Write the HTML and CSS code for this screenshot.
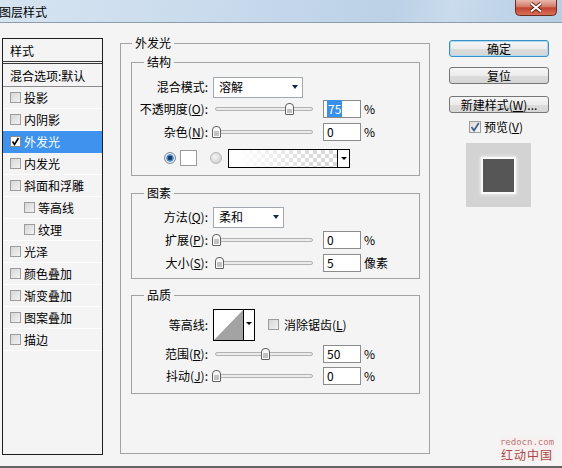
FILE: index.html
```html
<!DOCTYPE html>
<html lang="zh-CN">
<head>
<meta charset="utf-8">
<title>图层样式</title>
<link rel="stylesheet" href="styles.css">
</head>
<body>
<div class="window">
  <div class="titlebar">
    <span class="title">图层样式</span>
    <span class="close">
      <svg width="42" height="16" viewBox="0 0 42 16">
        <defs>
          <linearGradient id="cg" x1="0" y1="0" x2="0" y2="1">
            <stop offset="0" stop-color="#e9b8ac"/>
            <stop offset="0.45" stop-color="#d27866"/>
            <stop offset="0.5" stop-color="#c1412e"/>
            <stop offset="1" stop-color="#d8745c"/>
          </linearGradient>
        </defs>
        <path d="M0.5,0 V11.5 Q0.5,15.5 4.5,15.5 H37.5 Q41.5,15.5 41.5,11.5 V0" fill="url(#cg)" stroke="#6b2a22"/>
        <path d="M16,3.5 L26,11.5 M26,3.5 L16,11.5" stroke="#5a1a14" stroke-width="3.6"/>
        <path d="M16,3.5 L26,11.5 M26,3.5 L16,11.5" stroke="#fff" stroke-width="2"/>
      </svg>
    </span>
  </div>

  <div class="content">
    <div class="styles-list">
      <div class="list-head">样式</div>
      <div class="list-blend">混合选项:默认</div>
      <div class="item"><span class="cb"></span>投影</div>
      <div class="item"><span class="cb"></span>内阴影</div>
      <div class="item selected"><span class="cb checked"><svg width="9" height="9" viewBox="0 0 9 9"><path d="M1.5,4.5 L3.5,7.5 L7.5,1" fill="none" stroke="#000" stroke-width="1.6"/></svg></span>外发光</div>
      <div class="item"><span class="cb"></span>内发光</div>
      <div class="item"><span class="cb"></span>斜面和浮雕</div>
      <div class="item sub"><span class="cb"></span>等高线</div>
      <div class="item sub"><span class="cb"></span>纹理</div>
      <div class="item"><span class="cb"></span>光泽</div>
      <div class="item"><span class="cb"></span>颜色叠加</div>
      <div class="item"><span class="cb"></span>渐变叠加</div>
      <div class="item"><span class="cb"></span>图案叠加</div>
      <div class="item"><span class="cb"></span>描边</div>
    </div>

    <fieldset class="group main">
      <legend>外发光</legend>

      <fieldset class="group sub-group structure">
        <legend>结构</legend>
        <div class="row h22">
          <span class="lbl">混合模式:</span>
          <div class="select w90"><span>溶解</span><i class="arrow"></i></div>
        </div>
        <div class="row h22">
          <span class="lbl">不透明度(<u>O</u>):</span>
          <div class="slider"><div class="rail"><span class="track"></span><span class="thumb" style="left:75%"></span></div></div>
          <div class="num"><span class="hl">75</span></div><span class="unit">%</span>
        </div>
        <div class="row h24">
          <span class="lbl">杂色(<u>N</u>):</span>
          <div class="slider"><div class="rail"><span class="track"></span><span class="thumb" style="left:0%"></span></div></div>
          <div class="num">0</div><span class="unit">%</span>
        </div>
        <div class="row h28 color-row">
          <span class="radio on"></span>
          <span class="swatch"></span>
          <span class="radio off"></span>
          <div class="grad"><span class="grad-fill"></span><span class="grad-btn"><i class="arrow small"></i></span></div>
        </div>
      </fieldset>

      <fieldset class="group sub-group elements">
        <legend>图素</legend>
        <div class="row h22">
          <span class="lbl">方法(<u>Q</u>):</span>
          <div class="select w71"><span>柔和</span><i class="arrow"></i></div>
        </div>
        <div class="row h23">
          <span class="lbl">扩展(<u>P</u>):</span>
          <div class="slider"><div class="rail"><span class="track"></span><span class="thumb" style="left:0%"></span></div></div>
          <div class="num">0</div><span class="unit">%</span>
        </div>
        <div class="row h23">
          <span class="lbl">大小(<u>S</u>):</span>
          <div class="slider"><div class="rail"><span class="track"></span><span class="thumb" style="left:4%"></span></div></div>
          <div class="num">5</div><span class="unit">像素</span>
        </div>
      </fieldset>

      <fieldset class="group sub-group quality">
        <legend>品质</legend>
        <div class="row h33">
          <span class="lbl">等高线:</span>
          <div class="contour">
            <span class="contour-prev"><svg width="29" height="30" viewBox="0 0 29 30"><polygon points="0,30 29,0 29,30" fill="#a3a3a3"/></svg></span>
            <span class="contour-btn"><i class="arrow small"></i></span>
          </div>
          <span class="cb aa"></span><span class="aa-text">消除锯齿(<u>L</u>)</span>
        </div>
        <div class="row h25">
          <span class="lbl">范围(<u>R</u>):</span>
          <div class="slider"><div class="rail"><span class="track"></span><span class="thumb" style="left:50%"></span></div></div>
          <div class="num">50</div><span class="unit">%</span>
        </div>
        <div class="row h20">
          <span class="lbl">抖动(<u>J</u>):</span>
          <div class="slider"><div class="rail"><span class="track"></span><span class="thumb" style="left:0%"></span></div></div>
          <div class="num">0</div><span class="unit">%</span>
        </div>
      </fieldset>
    </fieldset>

    <div class="side">
      <div class="btn default">确定</div>
      <div class="btn reset">复位</div>
      <div class="btn newstyle">新建样式(<u>W</u>)...</div>
      <div class="preview-check">
        <span class="cb pv"><svg width="10" height="10" viewBox="0 0 10 10"><path d="M1.5,5 L4,8.5 L8.8,1" fill="none" stroke="#3a5a8a" stroke-width="1.6"/></svg></span>
        <span>预览(<u>V</u>)</span>
      </div>
      <div class="preview"><span class="preview-sq"></span></div>
    </div>
  </div>

  <div class="watermark">
    <div class="wm-en">redocn.com</div>
    <div class="wm-cn">红动中国</div>
  </div>
</div>
</body>
</html>
```
FILE: styles.css
```css
* { box-sizing: border-box; }
html, body { margin: 0; padding: 0; }
body {
  width: 562px;
  height: 468px;
  overflow: hidden;
  background: #f4f4f4;
  font-family: "Noto Sans CJK SC", "Noto Sans", sans-serif;
  font-size: 12px;
  line-height: 14px;
  color: #000;
}
u { text-decoration: underline; text-underline-offset: 1px; }

.window {
  position: relative;
  height: 468px;
  display: flex;
  flex-direction: column;
  border-bottom: 2px solid #646464;
}

/* title bar */
.titlebar {
  height: 23px;
  flex: none;
  display: flex;
  justify-content: space-between;
  align-items: flex-start;
  background: linear-gradient(100deg, #d6e4f1 0%, #c8daec 40%, #bcd1e6 70%, #c9dbec 80%, #b7cde2 100%);
  border-bottom: 1px solid #8d9cab;
}
.title { margin: 5px 0 0 -1px; }
.close { margin-right: 5px; height: 16px; display: block; }
.close svg { display: block; }

.content {
  flex: 1;
  display: flex;
  align-items: flex-start;
}

/* left styles list */
.styles-list {
  margin: 15px 0 0 2px;
  width: 101px;
  height: 417px;
  border: 1px solid #1e1e1e;
  background: #f4f4f4;
}
.list-head {
  height: 25px;
  padding: 5px 0 0 7px;
  border-bottom: 3px double #3a3a3a;
}
.list-blend {
  height: 23px;
  padding: 5px 0 0 7px;
  border-bottom: 1px solid #8a8a8a;
}
.item {
  height: 22px;
  display: flex;
  align-items: center;
  padding-left: 7px;
  border-bottom: 1px solid #fdfdfd;
}
.item.sub { padding-left: 21px; }
.item.selected { background: #3d93ee; color: #fff; border-bottom-color: #3d93ee; }
.cb {
  width: 11px;
  height: 11px;
  flex: none;
  margin-right: 3px;
  border: 1px solid #9c9c9c;
  background: linear-gradient(135deg, #d6d6d6, #f2f2f2);
  display: flex;
  align-items: center;
  justify-content: center;
}
.cb.checked { background: #fff; border-color: #8a8a8a; }
.cb svg { display: block; }

/* group boxes */
.group {
  margin: 0;
  border: 1px solid #a2a2a2;
  min-width: 0;
}
.group > legend {
  padding: 0 3px;
  line-height: 14px;
}
.main {
  margin: 13px 0 0 17px;
  width: 310px;
  height: 418px;
  flex: none;
  padding: 5px 9px 0 10px;
}
.main > legend { margin-left: 1px; }
.sub-group { width: 289px; padding: 0; }
.sub-group > legend { margin-left: 12px; }
.structure { padding: 7px 0 3px 0; }
.elements { margin-top: 10px; padding: 6px 0 4px 0; }
.quality { margin-top: 9px; padding: 6px 0 7px 0; }

.row { display: flex; align-items: center; }
.h20 { height: 20px; }
.h22 { height: 22px; }
.h23 { height: 23px; }
.h24 { height: 24px; }
.h25 { height: 25px; }
.h28 { height: 28px; }
.h33 { height: 33px; }

.lbl { width: 76px; flex: none; text-align: right; }

.select {
  margin-left: 5px;
  height: 21px;
  border: 1px solid #a3a8ae;
  background: #fff;
  display: flex;
  align-items: center;
  justify-content: space-between;
  padding: 0 4px 0 5px;
}
.w90 { width: 90px; }
.w71 { width: 71px; }
.arrow {
  display: block;
  width: 0;
  height: 0;
  border-left: 3.5px solid transparent;
  border-right: 3.5px solid transparent;
  border-top: 4px solid #15275a;
}
.arrow.small {
  border-left-width: 3px;
  border-right-width: 3px;
  border-top: 3px solid #000;
}

.slider { margin-left: 7px; width: 100px; height: 14px; flex: none; }
.rail { position: relative; margin: 0 1px; height: 14px; display: flex; align-items: center; }
.track {
  display: block;
  width: 100%;
  margin: 0 -1px;
  height: 4px;
  border: 1px solid #b2b2b2;
  border-radius: 2px;
  background: #ebebeb;
}
.thumb {
  position: absolute;
  top: 1px;
  width: 9px;
  height: 12px;
  margin-left: -4.5px;
  border: 1px solid #5f5f5f;
  border-radius: 4px 4px 1px 1px;
  background: linear-gradient(#f7f7f7 0 45%, #c2c2c2 45% 100%);
  box-shadow: inset 0 0 0 1px #fafafa;
}

.num {
  margin-left: 8px;
  width: 38px;
  height: 18px;
  flex: none;
  border: 1px solid #8c8c8c;
  background: #fff;
  padding: 1px 0 0 3px;
  line-height: 14px;
}
.hl { background: #3a8fe8; color: #fff; padding: 0 1px; }
.unit { margin-left: 3px; }

.color-row { padding-left: 32px; }
.radio {
  width: 12px;
  height: 12px;
  flex: none;
  border-radius: 50%;
}
.radio.on {
  border: 1px solid #7d8c99;
  background: radial-gradient(circle, #173f70 0 2px, #4d8cc6 2.6px 3.4px, #e4eaf0 4px);
}
.radio.off {
  margin-left: 13px;
  border: 1px solid #b6b6b6;
  background: radial-gradient(circle at 40% 40%, #f4f4f4, #c9c9c9);
}
.swatch {
  margin-left: 4px;
  width: 17px;
  height: 16px;
  border: 1px solid #9a9a9a;
  background: #fff;
}
.grad {
  margin-left: 6px;
  width: 122px;
  height: 19px;
  border: 1px solid #000;
  display: flex;
}
.grad-fill {
  flex: 1;
  background:
    linear-gradient(to right, #fff 8%, rgba(255,255,255,0) 80%),
    repeating-conic-gradient(#d9d9d9 0 25%, #fff 0 50%) 0 0 / 8px 8px;
}
.grad-btn {
  width: 12px;
  border-left: 1px solid #000;
  background: #fff;
  display: flex;
  align-items: center;
  justify-content: center;
}

.contour {
  margin-left: 5px;
  width: 42px;
  height: 32px;
  border: 1px solid #000;
  background: #fff;
  display: flex;
}
.contour-prev { width: 30px; border-right: 1px solid #000; }
.contour-prev svg { display: block; }
.contour-btn {
  flex: 1;
  display: flex;
  align-items: center;
  justify-content: center;
  padding-bottom: 3px;
}
.cb.aa { margin-left: 13px; margin-right: 5px; }

/* right column */
.side { margin: 17px 0 0 19px; width: 100px; flex: none; }
.btn {
  height: 17px;
  border: 1px solid #767676;
  border-radius: 3px;
  background: linear-gradient(#f6f6f6 0%, #ececec 50%, #dcdcdc 51%, #d6d6d6 100%);
  text-align: center;
  line-height: 15px;
}
.btn.default {
  border-color: #3c8fc4;
  box-shadow: inset 0 0 0 1px #a9dcf3;
}
.btn.reset { margin-top: 10px; }
.btn.newstyle { margin-top: 12px; }
.preview-check {
  margin: 8px 0 0 20px;
  height: 12px;
  display: flex;
  align-items: center;
}
.cb.pv { width: 12px; height: 12px; background: linear-gradient(135deg, #dcdcdc, #f6f6f6); }
.preview {
  margin: 10px 0 0 17px;
  width: 65px;
  height: 64px;
  background: #d3d3d3;
  display: flex;
  align-items: center;
  justify-content: center;
}
.preview-sq {
  width: 31px;
  height: 33px;
  background: #565656;
  box-shadow: 0 0 0 2px rgba(255,255,255,0.75), 0 0 3px 3px rgba(255,255,255,0.55);
}

/* watermark */
.watermark {
  position: absolute;
  right: 7px;
  bottom: 5px;
  width: 56px;
  display: flex;
  flex-direction: column;
  align-items: center;
  gap: 1px;
  background: rgba(250, 236, 236, 0.6);
}
.wm-en {
  font-family: "DejaVu Sans Mono", monospace;
  font-size: 9px;
  line-height: 10px;
  height: 10px;
  overflow: hidden;
  color: #b87878;
}
.wm-cn {
  font-size: 12px;
  line-height: 13px;
  height: 13px;
  letter-spacing: 1px;
  color: #a44a4a;
}
```
